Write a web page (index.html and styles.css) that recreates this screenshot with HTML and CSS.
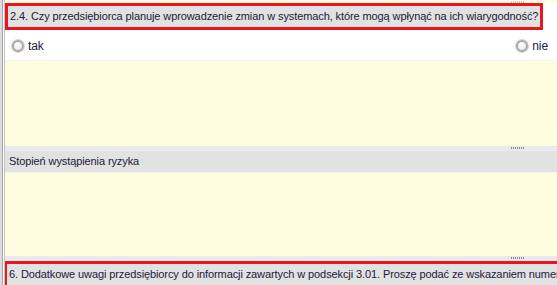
FILE: index.html
```html
<!DOCTYPE html>
<html lang="pl">
<head>
    <meta charset="UTF-8">
    <title>Formularz</title>
    <link rel="stylesheet" href="styles.css">
</head>
<body>
    <div class="frame">
        <div class="edge"></div>
        <div class="form">
            <div class="grip-strip top"><span class="grip"></span></div>
            <div class="question marked short">
                2.4. Czy przedsiębiorca planuje wprowadzenie zmian w systemach, które mogą wpłynąć na ich wiarygodność?
            </div>
            <div class="answers">
                <label class="option"><span class="radio"></span>tak</label>
                <label class="option"><span class="radio"></span>nie</label>
            </div>
            <div class="textarea tall"></div>
            <div class="grip-strip"><span class="grip"></span></div>
            <div class="question">Stopień wystąpienia ryzyka</div>
            <div class="textarea"></div>
            <div class="grip-strip"><span class="grip"></span></div>
            <div class="question marked wide">
                6. Dodatkowe uwagi przedsiębiorcy do informacji zawartych w podsekcji 3.01. Proszę podać ze wskazaniem numeru pytania.
            </div>
        </div>
    </div>
</body>
</html>
```

FILE: styles.css
```css
body {
    margin: 0;
    background: #ffffff;
    font-family: 'Liberation Sans', Arial, sans-serif;
    font-size: 11px;
    letter-spacing: -0.1px;
    color: #20203a;
    overflow: hidden;
}

.frame {
    display: flex;
    height: 285px;
}

.edge {
    width: 2px;
    flex: none;
    background: #dcdcdc;
    border-right: 1px solid #a4a4a4;
    box-shadow: 1px 0 0 #ffffff, 2px 0 0 #c4c4c4;
    margin-right: 2px;
}

.form {
    flex: 1;
    min-width: 0;
    overflow: hidden;
}

.grip-strip {
    height: 5px;
    background: #e9e9ee;
    position: relative;
}

.grip-strip.top {
    height: 3px;
    background: #fffde0;
}

.grip {
    position: absolute;
    left: 506px;
    top: 1px;
    width: 14px;
    height: 2px;
    background: repeating-linear-gradient(90deg, #8a8a90 0 1px, transparent 1px 2px);
}

.grip-strip.top .grip {
    top: 1px;
    background: repeating-linear-gradient(90deg, #c8c8cc 0 1px, transparent 1px 2px);
}

.question {
    background: #e2e2e2;
    height: 21px;
    line-height: 21px;
    padding-left: 4px;
    white-space: nowrap;
    overflow: hidden;
}

.question.marked {
    border: 3px solid #e8161e;
    height: 21px;
    line-height: 21px;
    padding-left: 2px;
}

.question.short {
    width: 530px;
}

.question.wide {
    width: 600px;
    margin-left: -1px;
}

.answers {
    display: flex;
    justify-content: space-between;
    align-items: center;
    height: 30px;
    padding: 1px 9px 0 7px;
    box-sizing: border-box;
    background: #ffffff;
    font-size: 12px;
}

.option {
    display: flex;
    align-items: center;
    gap: 4px;
}

.radio {
    width: 8px;
    height: 8px;
    border-radius: 50%;
    border: 2px solid #a8a8ae;
    background: radial-gradient(circle at 40% 35%, #ffffff 0, #f0f0f0 60%, #d8d8dc 100%);
    box-shadow: 0 0 0 1px #d4d4d8;
}

.textarea {
    height: 83px;
    background: #fffde0;
    border-top: 1px solid #f4f4ee;
}

.textarea.tall {
    height: 85px;
}
```
